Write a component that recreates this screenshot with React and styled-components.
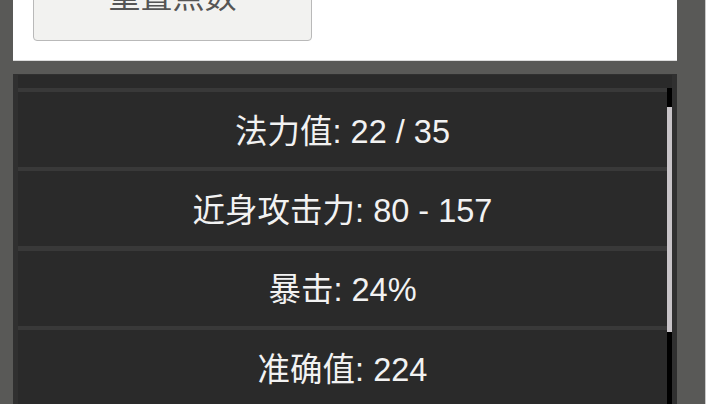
import React from "react";
import styled, { createGlobalStyle } from "styled-components";

const Global = createGlobalStyle`
  html, body {
    margin:0;
    padding:0;
    background:#ffffff;
    overflow:hidden;
  }
  body{
    font-family: "Liberation Sans", "Noto Sans CJK SC", Arial, sans-serif;
  }
`;

/* ---------- PAGE ---------- */

const Page = styled.div`
  display:flex;
  height:404px;
  overflow:hidden;
`;

const Frame = styled.div`
  width:664px;
  padding:0 28px 0 13px;
  background:#595957;
  display:flex;
  flex-direction:column;
  gap:13px;
`;

const Side = styled.div`
  flex:1;
  background:#ffffff;
  border-left:1px solid #c9c9c9;
`;

/* ---------- TOP CARD ---------- */

const TopCard = styled.div`
  height:60px;
  background:#ffffff;
  border-bottom:1px solid #dcdcdc;
  padding-left:20px;
  overflow:hidden;
`;

const ResetButton = styled.button`
  display:block;
  width:279px;
  height:90px;
  margin-top:-49px;
  padding:0 0 5px;
  background:#f2f2f0;
  border:1px solid #b9b9b9;
  border-radius:4px;
  color:#555555;
  font-family: "Liberation Sans", "Noto Sans CJK SC", sans-serif;
  font-size:32px;
  cursor:pointer;
`;

/* ---------- STATS PANEL ---------- */

const Panel = styled.div`
  flex:1;
  background:#303030;
  padding:1px 5px 0 4px;
  display:flex;
  flex-direction:column;
  overflow:hidden;
`;

const PanelHead = styled.div`
  height:13px;
  margin-left:1px;
  background:#2a2a2a;
`;

const Body = styled.div`
  flex:1;
  display:flex;
  overflow:hidden;
`;

const List = styled.div`
  flex:1;
  display:flex;
  flex-direction:column;
  gap:4.4px;
  padding-top:4px;
  background:#393939;
  margin-left:1px;
`;

const Row = styled.div`
  height:75px;
  flex-shrink:0;
  background:#2a2a2a;
  color:#f2f2f2;
  font-size:32.5px;
  padding-bottom:3px;
  box-sizing:border-box;
  display:flex;
  align-items:center;
  justify-content:center;
`;

const Track = styled.div`
  width:5px;
  background:#000000;
  display:flex;
  flex-direction:column;
`;

const Thumb = styled.div`
  margin-top:19px;
  height:225px;
  background:#c8c4c8;
`;

const stats = [
  "法力值: 22 / 35",
  "近身攻击力: 80 - 157",
  "暴击: 24%",
  "准确值: 224",
];

export default function App(){
  return(
    <Page>
      <Global />
      <Frame>
        <TopCard>
          <ResetButton>重置点数</ResetButton>
        </TopCard>

        <Panel>
          <PanelHead />
          <Body>
            <List>
              {stats.map((s) => (
                <Row key={s}>{s}</Row>
              ))}
            </List>
            <Track>
              <Thumb />
            </Track>
          </Body>
        </Panel>
      </Frame>
      <Side />
    </Page>
  )
}
